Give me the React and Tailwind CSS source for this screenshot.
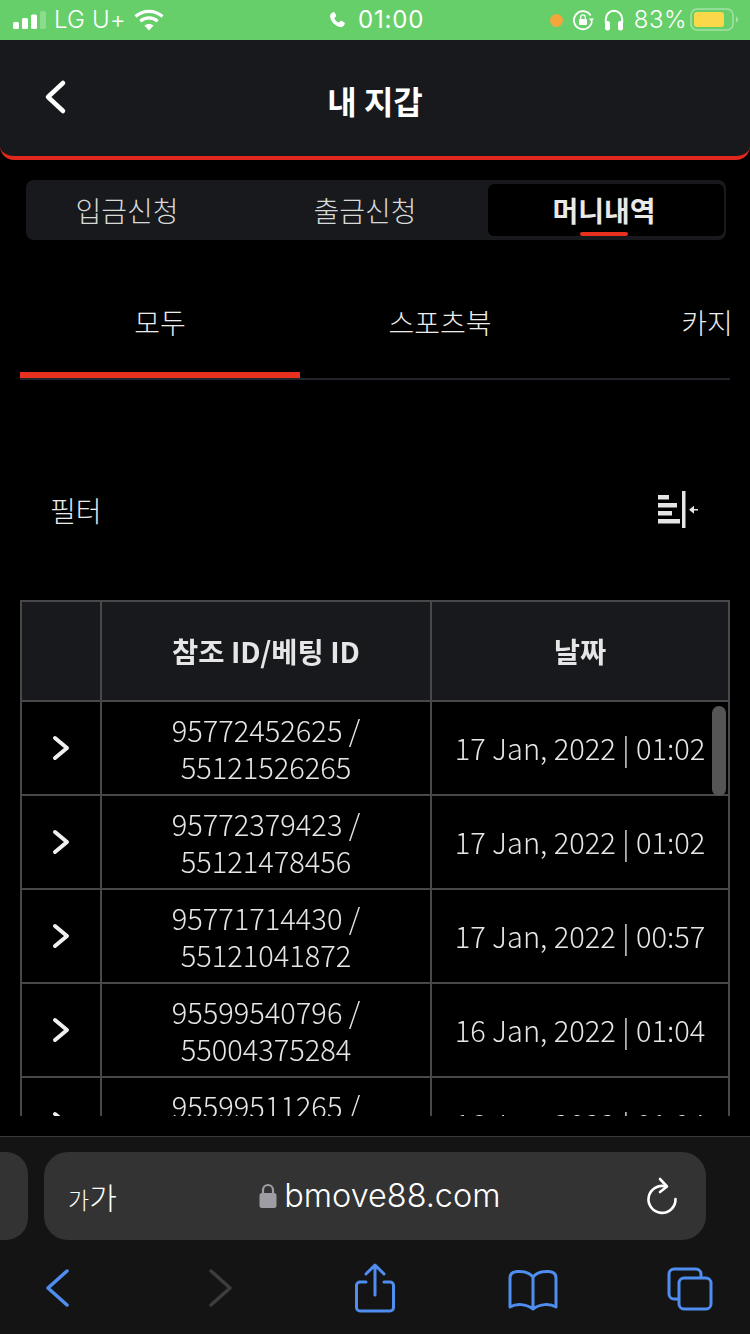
const rows = [
  ["95772452625 /", "55121526265", "17 Jan, 2022 | 01:02"],
  ["95772379423 /", "55121478456", "17 Jan, 2022 | 01:02"],
  ["95771714430 /", "55121041872", "17 Jan, 2022 | 00:57"],
  ["95599540796 /", "55004375284", "16 Jan, 2022 | 01:04"],
  ["95599511265 /", "55004350000", "16 Jan, 2022 | 01:04"],
];

const font = { fontFamily: '"Noto Sans CJK KR", "Noto Sans", sans-serif' };

function Signal() {
  return (
    <svg width="33" height="18" viewBox="0 0 33 18" fill="#fff">
      <rect x="0" y="11" width="6" height="7" rx="1.5" />
      <rect x="9" y="7" width="6" height="11" rx="1.5" />
      <rect x="18" y="3.5" width="6" height="14.5" rx="1.5" />
      <rect x="27" y="0" width="6" height="18" rx="1.5" fill="#fff" fillOpacity="0.25" />
    </svg>
  );
}

function Wifi() {
  return (
    <svg width="30" height="22" viewBox="0 0 30 22" fill="none" stroke="#fff" strokeWidth="3.2">
      <path d="M1.5 7.5C9 .6 21 .6 28.5 7.5" />
      <path d="M6.3 12.2c5-4.4 12.4-4.4 17.4 0" />
      <path d="M15 21.5l-4.6-4.9c2.6-2.1 6.6-2.1 9.2 0z" fill="#fff" stroke="none" />
    </svg>
  );
}

function Phone() {
  return (
    <svg width="18" height="18" viewBox="0 0 24 24" fill="#fff">
      <path d="M6.6 1.5c1-.5 1.9-.2 2.5.8l1.6 3c.5.9.3 1.7-.4 2.4L8.8 9c-.4.4-.4.8-.2 1.2 1.1 2 3 3.900 5 5.100.5.300.9.200 1.200-.1l1.300-1.400c.7-.7 1.500-.9 2.400-.4l3 1.700c1 .6 1.200 1.500.7 2.500-1.100 2.200-3 4-5.200 3.900C10.300 21.100 2.900 13.500 2.700 7 2.600 4.700 4.400 2.600 6.600 1.500z" />
    </svg>
  );
}

function RotationLock() {
  return (
    <svg width="22" height="22" viewBox="0 0 22 22" fill="none">
      <path d="M18.6 6.500A9 9 0 1 0 19.900 12" stroke="#fff" strokeWidth="1.800" />
      <path d="M16.800 9.500h5.200l-2.600 3.200z" fill="#fff" />
      <rect x="7" y="10" width="8" height="6" rx="1" fill="#fff" />
      <path d="M8.700 10V8.200a2.300 2.300 0 0 1 4.600 0V10" stroke="#fff" strokeWidth="1.300" />
    </svg>
  );
}

function Headphones() {
  return (
    <svg width="20" height="22" viewBox="0 0 20 22" fill="none">
      <path d="M1.800 14V10a8.200 8.200 0 0 1 16.400 0v4" stroke="#fff" strokeWidth="2" />
      <rect x="1" y="12" width="5" height="9.500" rx="2.300" fill="#fff" />
      <rect x="14" y="12" width="5" height="9.500" rx="2.300" fill="#fff" />
    </svg>
  );
}

function Battery() {
  return (
    <svg width="49" height="24" viewBox="0 0 49 24" fill="none">
      <rect x="1" y="1" width="42" height="21" rx="6" stroke="#fff" strokeOpacity="0.4" strokeWidth="1.500" />
      <rect x="4" y="4" width="30" height="15" rx="3" fill="#fbd84a" />
      <path d="M46 8.500c1.300.4 2 1.500 2 3s-.7 2.600-2 3z" fill="#fff" fillOpacity="0.4" />
    </svg>
  );
}

function FilterIcon() {
  return (
    <svg width="42" height="38" viewBox="0 0 42 38" fill="#e6e6e6">
      <rect x="1" y="4" width="11" height="4.500" />
      <rect x="1" y="12" width="19" height="4.500" />
      <rect x="1" y="20" width="14" height="4.500" />
      <rect x="1" y="28" width="22" height="4.500" />
      <rect x="25" y="0" width="3.500" height="37" />
      <rect x="35" y="18" width="6" height="1.500" />
      <path d="M37 14.800v8l-5-4z" />
    </svg>
  );
}

function Chevron({ cls, w, h, d, sw, color }) {
  return (
    <svg className={cls} width={w} height={h} viewBox={`0 0 ${w} ${h}`} fill="none" stroke={color} strokeWidth={sw} strokeLinecap="round" strokeLinejoin="round">
      <path d={d} />
    </svg>
  );
}

export default function App() {
  return (
    <div className="relative flex h-[1334px] w-[750px] flex-col overflow-hidden bg-black text-white" style={font}>
      {/* status bar */}
      <div className="relative flex h-10 shrink-0 items-center justify-between bg-[#66cf6a] pl-[13px] pr-[11px] font-['Inter'] text-[24px] font-light">
        <div className="flex items-center">
          <Signal />
          <span className="ml-[8px] tracking-[0.2px]">LG U+</span>
          <span className="ml-[8px]"><Wifi /></span>
        </div>
        <div className="absolute left-[328px] top-0 flex h-10 items-center">
          <Phone />
          <span className="ml-[12px] font-normal tracking-[0.8px]">01:00</span>
        </div>
        <div className="flex items-center">
          <span className="h-[13px] w-[13px] rounded-full bg-[#f4a63c]" />
          <span className="ml-[9px]"><RotationLock /></span>
          <span className="ml-[10px]"><Headphones /></span>
          <span className="ml-[10px] tracking-[0.5px]">83%</span>
          <span className="ml-[3px]"><Battery /></span>
        </div>
      </div>

      {/* header */}
      <div className="relative flex h-[120px] shrink-0 items-center justify-center rounded-b-[14px] border-b-4 border-[#e0281e] bg-[#17191d]">
        <Chevron cls="absolute left-[44px] top-[39px]" w={24} h={36} sw={4.5} color="#fff" d="M19 4 L4 18 L19 32" />
        <span className="pt-[4px] text-[32px] font-bold leading-none">내 지갑</span>
      </div>

      {/* segmented tabs */}
      <div className="ml-[26px] mr-[24px] mt-5 flex h-[60px] shrink-0 rounded-[8px] bg-[#17191d] py-[4px] pl-[4px] pr-[2px] text-[28px] text-[#d9d9d9]">
        <div className="flex w-[222px] items-center justify-center pr-[28px] font-light">입금신청</div>
        <div className="flex w-[236px] items-center justify-center pr-[10px] font-light">출금신청</div>
        <div className="relative flex flex-1 items-center justify-center rounded-[6px] bg-black pr-[4px] font-bold text-[#e9e9e9]">
          머니내역
          <span className="absolute bottom-0 left-[92px] h-[4px] w-[48px] rounded-full bg-[#e8301f]" />
        </div>
      </div>

      {/* category tabs */}
      <div className="mx-5 mt-[30px] flex h-[110px] shrink-0 overflow-hidden border-b-2 border-[#22242c] text-[28px] font-light text-[#ececec]">
        <div className="relative flex w-[280px] shrink-0 items-center justify-center pb-[4px]">
          모두
          <span className="absolute bottom-0 left-0 h-[6px] w-[280px] bg-[#e8301f]" />
        </div>
        <div className="flex w-[280px] shrink-0 items-center justify-center pb-[4px]">스포츠북</div>
        <div className="flex w-[280px] shrink-0 items-center justify-center pb-[4px]">카지노</div>
      </div>

      {/* filter */}
      <div className="mt-[100px] flex h-[60px] shrink-0 items-center justify-between pl-[50px] pr-[51px]">
        <span className="text-[28px] font-light text-[#ececec]">필터</span>
        <FilterIcon />
      </div>

      {/* table */}
      <div className="relative mx-5 mt-[60px] h-[516px] shrink-0 overflow-hidden">
        <table className="w-[710px] table-fixed border-collapse text-center text-[29px] text-[#e6e6e6] will-change-transform">
          <colgroup>
            <col className="w-[80px]" />
            <col className="w-[330px]" />
            <col />
          </colgroup>
          <thead>
            <tr className="h-[100px] bg-[#17191d] text-[28.5px] font-bold">
              <th className="border-2 border-[#48484b]" />
              <th className="border-2 border-[#48484b] font-bold">참조 ID/베팅 ID</th>
              <th className="border-2 border-[#48484b] font-bold">날짜</th>
            </tr>
          </thead>
          <tbody className="font-light">
            {rows.map((r) => (
              <tr key={r[0]} className="h-[94px]">
                <td className="border-2 border-[#48484b]">
                  <Chevron cls="mx-auto" w={18} h={26} sw={4} color="#f0f0f0" d="M3 3 L15 13 L3 23" />
                </td>
                <td className="border-2 border-[#48484b] leading-[37px]">
                  {r[0]}
                  <br />
                  {r[1]}
                </td>
                <td className="whitespace-nowrap border-2 border-[#48484b] p-0">{r[2]}</td>
              </tr>
            ))}
          </tbody>
        </table>
        <div className="absolute left-[692px] top-[106px] h-[90px] w-[14px] rounded-full bg-[#555557]" />
      </div>

      {/* browser bar */}
      <div className="mt-5 flex-1 border-t border-[#3a3a3c] bg-[#141414]">
        <div className="relative mt-[15px] h-[88px]">
          <div className="absolute left-0 top-0 h-[88px] w-[28px] rounded-r-[22px] bg-[#333]" />
          <div className="absolute left-[44px] top-0 flex h-[88px] w-[662px] items-center justify-between rounded-[24px] bg-[#333] pl-[24px] pr-[28px]">
            <span className="text-[30px] font-light leading-none"><span className="text-[23px]">가</span>가</span>
            <div className="mr-[3px] flex items-center pt-[1px] font-['Inter'] text-[32.4px] font-light">
              <svg width="18" height="26" viewBox="0 0 18 26" className="mr-[7px]">
                <path d="M4 11V7a5 5 0 0 1 10 0v4" fill="none" stroke="#9d9da3" strokeWidth="2.200" />
                <rect x="0.500" y="10" width="17" height="15" rx="2.500" fill="#9d9da3" />
              </svg>
              bmove88.com
            </div>
            <svg width="32" height="38" viewBox="0 0 32 38" fill="none" stroke="#fff" strokeWidth="2.600" strokeLinecap="round" strokeLinejoin="round">
              <path d="M20 9.500A13.500 13.500 0 1 0 29.500 22" />
              <path d="M14 2l7 7.500-7 5.500" />
            </svg>
          </div>
        </div>
        <div className="relative h-[94px]">
          <Chevron cls="absolute left-[44px] top-[28px]" w={28} h={40} sw={3.5} color="#4f8ef0" d="M23 3 L4 20 L23 37" />
          <Chevron cls="absolute left-[206px] top-[28px]" w={28} h={40} sw={3.5} color="#3d3d3f" d="M5 3 L24 20 L5 37" />
          <svg className="absolute left-[354px] top-[23px]" width="42" height="50" viewBox="0 0 42 50" fill="none" stroke="#4f8ef0" strokeWidth="3" strokeLinecap="round" strokeLinejoin="round">
            <path d="M12 19H6a3.500 3.500 0 0 0-3.500 3.500v22A3.500 3.500 0 0 0 6 48h30a3.500 3.500 0 0 0 3.500-3.500v-22A3.500 3.500 0 0 0 36 19h-6" />
            <path d="M21 32V3M12 11l9-9 9 9" />
          </svg>
          <svg className="absolute left-[508px] top-[29px]" width="50" height="42" viewBox="0 0 50 42" fill="none" stroke="#4f8ef0" strokeWidth="3" strokeLinecap="round" strokeLinejoin="round">
            <path d="M25 8C21 3 15 2 9 2.500 5 2.800 2 4.500 2 9v29c6-3.500 16-3.500 23 2 7-5.500 17-5.500 23-2V9c0-4.500-3-6.200-7-6.500C35 2 29 3 25 8zM25 8v32" />
          </svg>
          <svg className="absolute left-[667px] top-[27px]" width="46" height="44" viewBox="0 0 46 44" fill="none" stroke="#4f8ef0" strokeWidth="3">
            <path d="M11 32H7a5 5 0 0 1-5-5V7a5 5 0 0 1 5-5h22a5 5 0 0 1 5 5v3" />
            <rect x="12" y="11" width="32" height="31" rx="5" />
          </svg>
        </div>
      </div>
    </div>
  );
}
